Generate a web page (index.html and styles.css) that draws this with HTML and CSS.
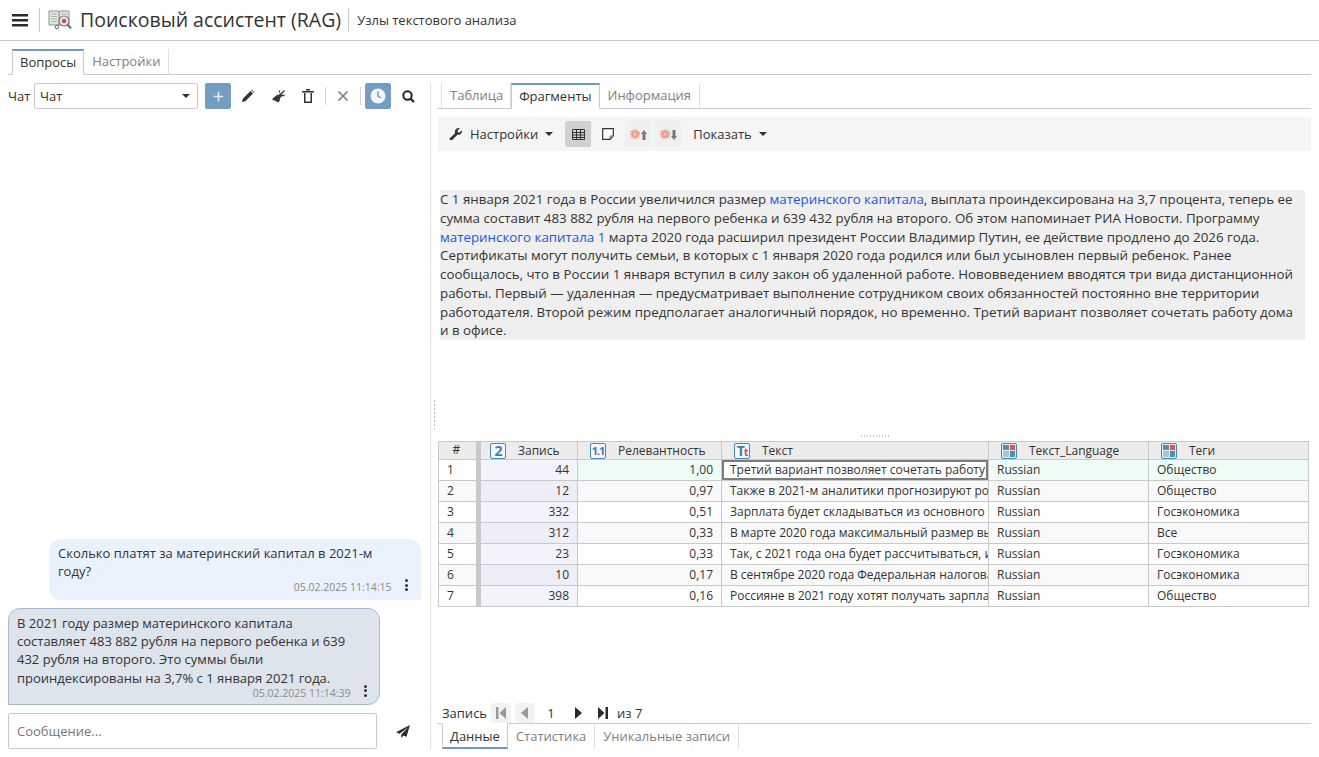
FILE: index.html
```html
<!DOCTYPE html>
<html lang="ru">
<head>
<meta charset="utf-8">
<title>Поисковый ассистент (RAG)</title>
<link rel="stylesheet" href="styles.css">
</head>
<body>
<header class="topbar">
  <svg class="burger" width="16" height="13" viewBox="0 0 16 13"><path d="M0 0h16v2.4H0zM0 5h16v2.4H0zM0 10h16v2.4H0z" fill="#2b2b2b"/></svg>
  <span class="vsep first"></span>
  <svg class="appicon" width="24" height="24" viewBox="0 0 24 24">
    <path d="M1 3h9l1 1 1-1h9v14H1z" fill="#e4e8e0" stroke="#8f938d"/>
    <path d="M3 6h6M3 8.500h6M3 11h6M3 13.500h6" stroke="#a9b5a2"/>
    <path d="M13 6h6M13 8.500h3" stroke="#a9b5a2"/>
    <path d="M11 4v13" stroke="#7b7f79"/>
    <circle cx="9" cy="19" r="1.800" fill="none" stroke="#666"/>
    <circle cx="16" cy="13" r="5" fill="#ececec" stroke="#7d7d7d" stroke-width="1.200"/>
    <circle cx="16" cy="13" r="2.300" fill="#cf4b52"/>
    <path d="M19.500 16.500l3.500 4" stroke="#777" stroke-width="2.200"/>
  </svg>
  <h1 class="apptitle">Поисковый ассистент (RAG)</h1>
  <span class="vsep second"></span>
  <span class="subtitle">Узлы текстового анализа</span>
</header>

<nav class="tabs outer">
  <a class="tab active">Вопросы</a>
  <a class="tab">Настройки</a>
</nav>

<main class="workspace">
  <section class="left">
    <div class="chatbar">
      <label class="chatlabel">Чат</label>
      <div class="select"><span>Чат</span><i class="caret dark"></i></div>
      <button class="ibtn primary plus"><svg width="11" height="11" viewBox="0 0 14 14"><path d="M6 1h2v5h5v2H8v5H6V8H1V6h5z" fill="#fff" opacity=".8"/></svg></button>
      <button class="ibtn"><svg width="14" height="14" viewBox="0 0 14 14"><path d="M1 13l.8-3.300L9.500 2 12 4.500 4.300 12.200zM10.300 1.200l.6-.5 2.400 2.400-.5.6z" fill="#333"/></svg></button>
      <button class="ibtn"><svg width="15" height="15" viewBox="0 0 15 15"><path d="M6.500 5.500l3 3-1.500 5-1-.8-1 .6-.5-1.300-1.300.6-.4-1.300-1.600.2-1-1.500z" fill="#333"/><path d="M8 6.500l1.300 1.300 1.300-1.300L9.300 5.200zM10 5l3.500-3.500M11 6.500h2.500M8.500 3.500V1.500" stroke="#333" stroke-width="1.300" fill="#333"/></svg></button>
      <button class="ibtn"><svg width="12" height="14" viewBox="0 0 12 14"><path d="M0 2h12v1.500H0zM4 0h4v1.500H4zM2 4h1.500v8.500h5V4H10v10H2z" fill="#333"/></svg></button>
      <span class="tsep"></span>
      <button class="ibtn"><svg width="12" height="12" viewBox="0 0 12 12"><path d="M1.500 1.500l9 9M10.500 1.500l-9 9" stroke="#777" stroke-width="1.500"/></svg></button>
      <span class="tsep"></span>
      <button class="ibtn primary"><svg width="16" height="16" viewBox="0 0 16 16"><circle cx="8" cy="8" r="7.500" fill="#f2f5f9"/><path d="M8 3.500V8l3 2" stroke="#75a0c6" stroke-width="1.500" fill="none"/></svg></button>
      <button class="ibtn"><svg width="13" height="13" viewBox="0 0 13 13"><circle cx="5.500" cy="5.500" r="4.200" fill="none" stroke="#222" stroke-width="2"/><path d="M8.500 8.500l3.500 3.500" stroke="#222" stroke-width="2.200"/></svg></button>
    </div>
    <div class="messages">
      <article class="msg user">
        <p>Сколько платят за материнский капитал в 2021-м году?</p>
        <footer><time>05.02.2025 11:14:15</time><span class="dots"><i></i><i></i><i></i></span></footer>
      </article>
      <article class="msg bot">
        <p>В 2021 году размер материнского капитала составляет 483 882 рубля на первого ребенка и 639 432 рубля на второго. Это суммы были проиндексированы на 3,7% с 1 января 2021 года.</p>
        <footer><time>05.02.2025 11:14:39</time><span class="dots"><i></i><i></i><i></i></span></footer>
      </article>
    </div>
    <div class="composer">
      <div class="input">Сообщение...</div>
      <svg class="send" width="14" height="13" viewBox="0 0 16 15"><path d="M16 0L0 8.500l4 1.500L14 2.500 6 11v4l2.700-3 3.300 1.500z" fill="#2b2b2b"/></svg>
    </div>
  </section>

  <div class="splitter"><span class="grip"></span></div>

  <section class="right">
    <nav class="tabs inner">
      <a class="tab">Таблица</a>
      <a class="tab active">Фрагменты</a>
      <a class="tab">Информация</a>
    </nav>
    <div class="toolbar">
      <button class="tbtext settings"><svg width="14" height="14" viewBox="0 0 14 14"><path d="M1 13l-.5-1.500L6 6.200C5.300 4 6.300 1.500 9 1c.8-.1 1.300 0 1.800.2L8.500 3.500l.4 1.700 1.700.4 2.300-2.300c.6 2.800-1.700 5-4.500 4.400l-5.500 5.600z" fill="#333"/></svg><span>Настройки</span><i class="caret"></i></button>
      <button class="tbicon on"><svg width="13" height="11" viewBox="0 0 13 11"><path d="M.5.500h12v10H.500zM.5 3.500h12M.5 6h12M.5 8.500h12M4.500.5v10M8.500.5v10" fill="none" stroke="#333"/></svg></button>
      <button class="tbicon"><svg width="12" height="12" viewBox="0 0 12 12"><path d="M.7.700h10.600v7L8 11.300H.7z" fill="#fff" stroke="#333" stroke-width="1.200"/><path d="M8 11V8h3" fill="none" stroke="#5b7fa0"/></svg></button>
      <button class="tbicon shade"><svg width="18" height="13" viewBox="0 0 18 13"><path d="M6 0l1.200 3.200L9.500 1 9 4.200l3-.7-2 2.500 2 1-2.800.7 1.600 2.800-3-1.300L7 12l-1-2.500L4.500 12l-.3-3-3 1.300L3 7.500.200 6.800l2.500-1.300L.5 3l3 .8L3.200 1l2 2.200z" fill="#ee9c8e"/><circle cx="6" cy="6.200" r="1.600" fill="#f4cdb0"/><path d="M15 2l3 4h-1.500v6h-3V6H12z" fill="#777"/></svg></button>
      <button class="tbicon shade"><svg width="18" height="13" viewBox="0 0 18 13"><path d="M6 0l1.200 3.200L9.500 1 9 4.200l3-.7-2 2.500 2 1-2.800.7 1.600 2.800-3-1.300L7 12l-1-2.500L4.500 12l-.3-3-3 1.300L3 7.500.200 6.800l2.500-1.300L.5 3l3 .8L3.200 1l2 2.200z" fill="#ee9c8e"/><circle cx="6" cy="6.200" r="1.600" fill="#f4cdb0"/><path d="M15 12l3-4h-1.500V2h-3v6H12z" fill="#777"/></svg></button>
      <button class="tbtext show"><span>Показать</span><i class="caret"></i></button>
    </div>
    <div class="fragment">С 1 января 2021 года в России увеличился размер <a>материнского капитала</a>, выплата проиндексирована на 3,7 процента, теперь ее сумма составит 483 882 рубля на первого ребенка и 639 432 рубля на второго. Об этом напоминает РИА Новости. Программу <a>материнского капитала</a> <a>1</a> марта 2020 года расширил президент России Владимир Путин, ее действие продлено до 2026 года. Сертификаты могут получить семьи, в которых с 1 января 2020 года родился или был усыновлен первый ребенок. Ранее сообщалось, что в России 1 января вступил в силу закон об удаленной работе. Нововведением вводятся три вида дистанционной работы. Первый — удаленная — предусматривает выполнение сотрудником своих обязанностей постоянно вне территории работодателя. Второй режим предполагает аналогичный порядок, но временно. Третий вариант позволяет сочетать работу дома и в офисе.</div>
    <div class="hgrip"></div>
    <table class="grid">
      <colgroup><col class="c0"><col class="c1"><col class="c2"><col class="c3"><col class="c4"><col class="c5"></colgroup>
      <thead>
        <tr>
          <th class="num">#</th>
          <th><span class="th first"><b class="type">2</b>Запись</span></th>
          <th><span class="th"><b class="type small">1<em>.</em>1</b>Релевантность</span></th>
          <th><span class="th"><b class="type tt">T<em>t</em></b>Текст</span></th>
          <th><span class="th"><b class="type cat"><i></i><i class="red"></i><i class="light"></i><i></i></b>Текст_Language</span></th>
          <th><span class="th"><b class="type cat"><i></i><i class="red"></i><i class="light"></i><i></i></b>Теги</span></th>
        </tr>
      </thead>
      <tbody>
        <tr class="hit"><td class="num">1</td><td class="r rec">44</td><td class="r">1,00</td><td class="txt cur">Третий вариант позволяет сочетать работу дома и в офисе.</td><td>Russian</td><td>Общество</td></tr>
        <tr><td class="num">2</td><td class="r rec">12</td><td class="r">0,97</td><td class="txt">Также в 2021-м аналитики прогнозируют рост зарплат в стране.</td><td>Russian</td><td>Общество</td></tr>
        <tr><td class="num">3</td><td class="r rec">332</td><td class="r">0,51</td><td class="txt">Зарплата будет складываться из основного оклада и надбавок.</td><td>Russian</td><td>Госэкономика</td></tr>
        <tr><td class="num">4</td><td class="r rec">312</td><td class="r">0,33</td><td class="txt">В марте 2020 года максимальный размер выплаты вырос.</td><td>Russian</td><td>Все</td></tr>
        <tr><td class="num">5</td><td class="r rec">23</td><td class="r">0,33</td><td class="txt">Так, с 2021 года она будет рассчитываться, исходя из дохода.</td><td>Russian</td><td>Госэкономика</td></tr>
        <tr><td class="num">6</td><td class="r rec">10</td><td class="r">0,17</td><td class="txt">В сентябре 2020 года Федеральная налоговая служба сообщила.</td><td>Russian</td><td>Госэкономика</td></tr>
        <tr><td class="num">7</td><td class="r rec">398</td><td class="r">0,16</td><td class="txt">Россияне в 2021 году хотят получать зарплату выше средней.</td><td>Russian</td><td>Общество</td></tr>
      </tbody>
    </table>
    <div class="pager">
      <span class="plabel">Запись</span>
      <button class="pbtn off"><svg width="10" height="12" viewBox="0 0 10 12"><path d="M0 0h2.500v12H0zM10 0v12L3.500 6z" fill="#999"/></svg></button>
      <button class="pbtn off"><svg width="8" height="12" viewBox="0 0 8 12"><path d="M7 0v12L0 6z" fill="#999"/></svg></button>
      <span class="pnum">1</span>
      <button class="pbtn"><svg width="8" height="12" viewBox="0 0 8 12"><path d="M1 0v12l7-6z" fill="#2b2b2b"/></svg></button>
      <button class="pbtn"><svg width="10" height="12" viewBox="0 0 10 12"><path d="M0 0v12l6.500-6zM7.500 0H10v12H7.500z" fill="#2b2b2b"/></svg></button>
      <span class="pof">из 7</span>
    </div>
    <nav class="tabs bottom">
      <a class="tab active">Данные</a>
      <a class="tab">Статистика</a>
      <a class="tab">Уникальные записи</a>
    </nav>
  </section>
</main>
</body>
</html>
```
FILE: styles.css
```css
* { box-sizing: border-box; }
html, body { height: 100%; }
body {
  margin: 0;
  height: 757px;
  overflow: hidden;
  background: #fff;
  color: #333;
  font-family: "Open Sans", "Liberation Sans", sans-serif;
  font-size: 13px;
  display: flex;
  flex-direction: column;
}
button { font: inherit; color: inherit; border: 0; background: none; padding: 0; display: inline-flex; align-items: center; justify-content: center; }

.topbar {
  height: 41px;
  flex: none;
  display: flex;
  align-items: center;
  border-bottom: 1px solid #c9c9c9;
  padding-left: 12px;
}
.burger { flex: none; }
.vsep { width: 1px; height: 24px; background: #c9c9c9; flex: none; }
.vsep.first { margin-left: 11px; margin-right: 8px; }
.appicon { flex: none; margin-right: 8px; }
.apptitle { margin: 0; font-size: 19.500px; font-weight: 400; white-space: nowrap; line-height: 28px; }
.vsep.second { margin-left: 7px; margin-right: 8px; }
.subtitle { font-size: 13px; white-space: nowrap; }

.tabs { display: flex; flex: none; border-bottom: 1px solid #c9c9c9; }
.tab {
  height: 26px;
  padding: 0 8px;
  line-height: 24px;
  color: #808080;
  border-right: 1px solid #e0e0e0;
  white-space: nowrap;
}
.tab.active {
  color: #333;
  background: #fff;
  border: 1px solid #c9c9c9;
  border-top: 2px solid #6f9ac3;
  border-bottom: 1px solid #fff;
  margin-bottom: -1px;
  height: 26px;
  line-height: 23px;
  padding: 0 7px;
}
.tabs.outer { margin: 8px 8px 0; padding-left: 4px; height: 26px; }
.tabs.inner { width: 873px; padding-left: 3px; height: 26px; }
.tabs.inner .tab { height: 25px; line-height: 24px; }
.tabs.inner .tab.active { height: 26px; line-height: 23px; }
.tabs.inner .tab:first-child { border-left: 1px solid #e0e0e0; padding-right: 7px; }

.workspace { flex: 1; display: flex; min-height: 0; padding-top: 8px; }

.left { width: 430px; flex: none; display: flex; flex-direction: column; padding: 0 8px 8px; }
.chatbar { display: flex; align-items: center; height: 26px; flex: none; }
.chatlabel { width: 26px; flex: none; }
.select {
  width: 164px; height: 26px;
  border: 1px solid #c9c9c9; border-radius: 2px;
  display: flex; align-items: center; justify-content: space-between;
  padding: 0 7px 0 5px;
  flex: none;
}
.caret { display: inline-block; width: 0; height: 0; border-left: 4px solid transparent; border-right: 4px solid transparent; border-top: 4px solid #333; }
.ibtn { width: 26px; height: 26px; border-radius: 2px; flex: none; margin-left: 4px; }
.ibtn.primary { background: #739dc4; }
.ibtn.plus { margin-left: 7px; }
.tsep { width: 1px; height: 18px; background: #d4d4d4; flex: none; margin-left: 4px; }

.messages { flex: 1; min-height: 0; display: flex; flex-direction: column; justify-content: flex-end; }
.msg p { margin: 0; line-height: 18.200px; }
.msg footer { display: flex; justify-content: flex-end; align-items: center; height: 14px; }
.msg time { font-size: 10.500px; color: #8a8a8a; }
.dots { display: inline-flex; flex-direction: column; gap: 1.500px; margin-left: 13px; width: 3px; margin-top: -4px; }
.dots i { display: block; width: 3px; height: 3px; border-radius: 50%; background: #333; }
.msg.user {
  align-self: flex-end;
  width: 372px;
  height: 61px;
  margin-right: 1px;
  background: #eaf2fd;
  border-radius: 12px 12px 0 12px;
  padding: 5px 13.500px 0 9px;
}
.msg.user p { padding-right: 20px; }
.msg.bot {
  align-self: flex-start;
  width: 372px;
  height: 97px;
  margin-top: 8px;
  background: #dee4ec;
  border: 1px solid #a7bacd;
  border-radius: 12px 12px 12px 0;
  padding: 5px 12.500px 0 8px;
}
.msg.bot p { padding-right: 12px; }
.msg.bot footer { margin-top: -1px; }
.composer { display: flex; align-items: center; margin-top: 8px; height: 36px; flex: none; }
.input {
  width: 369px; height: 36px;
  border: 1px solid #c9c9c9; border-radius: 2px;
  padding: 0 8px;
  line-height: 34px;
  color: #767676;
}
.send { margin-left: 19px; }

.splitter { width: 8px; flex: none; position: relative; border-left: 1px solid #e2e2e2; margin-bottom: 7px; }
.grip { position: absolute; left: 2px; top: 316px; width: 3px; height: 30px; background: radial-gradient(circle, #bdbdbd 1px, transparent 1px) 0 0 / 3px 4px; }

.right { flex: 1; min-width: 0; display: flex; flex-direction: column; padding-bottom: 8px; }
.toolbar {
  height: 34px; flex: none;
  margin-top: 8px;
  width: 873px;
  background: #f5f5f5;
  display: flex; align-items: center;
  padding-left: 11px;
}
.tbtext { height: 26px; }
.tbtext span { margin-left: 7px; }
.tbtext .caret { margin-left: 7px; }
.tbicon { width: 26px; height: 26px; border-radius: 2px; margin-left: 4px; flex: none; }
.settings + .tbicon { margin-left: 12px; }
.tbicon.on { background: #d0d0d0; }
.tbicon.shade { background: #f0f0f0; }
.tbtext.show { margin-left: 12px; }
.tbtext.show span { margin-left: 0; }

.fragment {
  margin: 39px 0 0 2px;
  width: 865px;
  height: 150px;
  flex: none;
  padding-right: 3px;
  background: #efefef;
  font-size: 13.330px;
  line-height: 18.750px;
}
.fragment a { color: #1a56e8; }
.hgrip { width: 30px; height: 2px; margin: 95px 0 0 422px; flex: none; background: radial-gradient(circle, #c4c4c4 1px, transparent 1px) 0 0 / 3px 2px; }

.grid {
  margin-top: 4px;
  table-layout: fixed;
  border-collapse: collapse;
  width: 871px;
  flex: none;
  font-size: 12px;
}
.c0 { width: 40px; }
.c1 { width: 99px; }
.c2 { width: 144px; }
.c3 { width: 267px; }
.c4 { width: 160px; }
.c5 { width: 160px; }
.grid th, .grid td { border: 1px solid #c9c9c9; padding: 0; overflow: hidden; white-space: nowrap; }
.grid th { height: 18px; background: #ececec; font-weight: 400; text-align: left; line-height: 16px; vertical-align: top; }
.grid td { height: 21px; padding: 0 8px 2px; }
.grid td.txt { padding-right: 0; }
.grid th:first-child, .grid td:first-child { border-right: 5px solid #c9c9c9; }
.grid th.num { text-align: center; padding-right: 2px; }
.grid tbody tr:nth-child(even) td { background: #f9f9f9; }
.grid td.rec { background: #f3f3fe; }
.grid tbody tr:nth-child(even) td.rec { background: #eeeef9; }
.grid tr.hit td { background: #edfcf5; }
.grid tr.hit td.num { background: #fff; }
.grid tr.hit td.rec { background: #f3f3fe; }
.grid td.r { text-align: right; }
.grid tr.hit td.cur { background: #fff; box-shadow: inset 0 0 0 2px #7c7c7c; }
.th { display: flex; align-items: center; height: 17px; padding-left: 12px; }
.th.first { padding-left: 9px; }
.th .type { margin-right: 12px; }
.type {
  width: 16px; height: 16px;
  flex: none;
  border: 1px solid #4a86b8;
  border-radius: 2px;
  color: #3f7cb0;
  font-size: 14px;
  font-weight: 700;
  line-height: 14px;
  text-align: center;
  background: #f3f8fc;
  overflow: hidden;
  letter-spacing: -1px;
}
.type em { font-style: normal; color: #d9433f; }
.type.small { font-size: 11px; }
.type.tt em { font-size: 10px; }
.type.cat { display: grid; grid-template-columns: 1fr 1fr; gap: 1px; padding: 1px; background: #e5edf3; }
.type.cat i { display: block; background: #5a8bb3; }
.type.cat i.red { background: #d9534f; }
.type.cat i.light { background: #a9c4da; }

.pager { margin-top: auto; display: flex; align-items: center; height: 20px; flex: none; padding-left: 4px; }
.pbtn { width: 20px; height: 20px; border-radius: 2px; flex: none; }
.pbtn.off { background: #f2f2f2; }
.plabel { margin-right: 4px; }
.pnum { width: 24px; text-align: center; margin-left: 4px; }
.pbtn + .pbtn { margin-left: 4px; }
.pnum + .pbtn { margin-left: 5px; }
.pnum + .pbtn + .pbtn { margin-left: 5px; }
.pof { margin-left: 4px; }
.tabs.bottom { border-bottom: 0; border-top: 1px solid #c9c9c9; height: 26px; width: 873px; padding-left: 4px; }
.tabs.bottom .tab.active { border: 1px solid #c9c9c9; border-top: 1px solid #fff; border-bottom: 2px solid #6f9ac3; margin: -1px 0 0 0; height: 26px; line-height: 25px; }
.tabs.bottom .tab { line-height: 24px; height: 25px; }
```
